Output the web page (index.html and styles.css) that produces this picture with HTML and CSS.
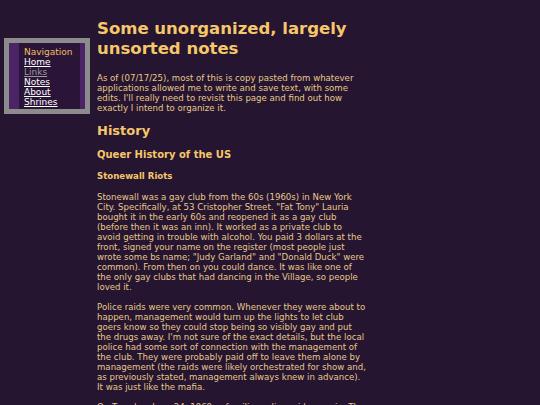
FILE: index.html
```html
<!DOCTYPE html>
<html>
<head>
<meta charset="utf-8">
<title>Notes</title>
<link rel="stylesheet" href="styles.css">
</head>
<body>
<div class="page">
  <nav class="nav">
    <div class="nav-inner">
      <div class="nav-title">Navigation</div>
      <a class="nav-link" href="#">Home</a>
      <a class="nav-link visited" href="#">Links</a>
      <a class="nav-link" href="#">Notes</a>
      <a class="nav-link" href="#">About</a>
      <a class="nav-link" href="#">Shrines</a>
    </div>
  </nav>
  <main class="main">
    <h1 class="title">Some unorganized, largely unsorted notes</h1>
    <p class="text">As of (07/17/25), most of this is copy pasted from whatever<br>applications allowed me to write and save text, with some<br>edits. I'll really need to revisit this page and find out how<br>exactly I intend to organize it.</p>
    <h2 class="h2">History</h2>
    <h3 class="h3">Queer History of the US</h3>
    <h4 class="h4">Stonewall Riots</h4>
    <p class="text">Stonewall was a gay club from the 60s (1960s) in New York<br>City. Specifically, at 53 Cristopher Street. "Fat Tony" Lauria<br>bought it in the early 60s and reopened it as a gay club<br>(before then it was an inn). It worked as a private club to<br>avoid getting in trouble with alcohol. You paid 3 dollars at the<br>front, signed your name on the register (most people just<br>wrote some bs name; "Judy Garland" and "Donald Duck" were<br>common). From then on you could dance. It was like one of<br>the only gay clubs that had dancing in the Village, so people<br>loved it.</p>
    <p class="text">Police raids were very common. Whenever they were about to<br>happen, management would turn up the lights to let club<br>goers know so they could stop being so visibly gay and put<br>the drugs away. I'm not sure of the exact details, but the local<br>police had some sort of connection with the management of<br>the club. They were probably paid off to leave them alone by<br>management (the raids were likely orchestrated for show and,<br>as previously stated, management always knew in advance).<br>It was just like the mafia.</p>
    <p class="text">On Tuesday, June 24, 1969, a familiar police raid came in. The<br>police arrested employees and confiscated the liquor.</p>
  </main>
</div>
</body>
</html>
```
FILE: styles.css
```css
html, body {
  margin: 0;
  padding: 0;
  background: #261530;
}
body {
  font-family: "DejaVu Sans", Verdana, sans-serif;
  font-size: 8.6px;
  line-height: 10px;
  color: #e6c98a;
}
.page {
  display: flex;
  align-items: flex-start;
  padding: 0 0 0 4px;
}
.nav {
  margin-top: 38px;
  width: 61px;
  border: 5px solid #8c8c8c;
  background: #4a2466;
  padding: 0 5px 0 10px;
  flex: none;
}
.nav-inner {
  background: #2a1538;
  padding: 4px 0 2px 5px;
  display: flex;
  flex-direction: column;
  font-size: 9px;
}
.nav-title {
  color: #f0bf62;
}
.nav-link {
  color: #ffffff;
  text-decoration: underline;
}
.nav-link.visited {
  color: #9a9a9a;
}
.main {
  margin-left: 7px;
  width: 290px;
  flex: none;
}
.title {
  font-size: 16.5px;
  line-height: 20px;
  font-weight: bold;
  color: #f5c76a;
  margin: 19px 0 14px;
}
.text {
  margin: 0 0 10px;
}
.h2 {
  font-size: 13px;
  line-height: 16px;
  font-weight: bold;
  color: #f5c76a;
  margin: 10px 0 9px;
}
.h3 {
  font-size: 10px;
  line-height: 13px;
  font-weight: bold;
  color: #f5c76a;
  margin: 0 0 10px;
}
.h4 {
  font-size: 8.6px;
  line-height: 10px;
  font-weight: bold;
  color: #f5c76a;
  margin: 0 0 11px;
}
```
